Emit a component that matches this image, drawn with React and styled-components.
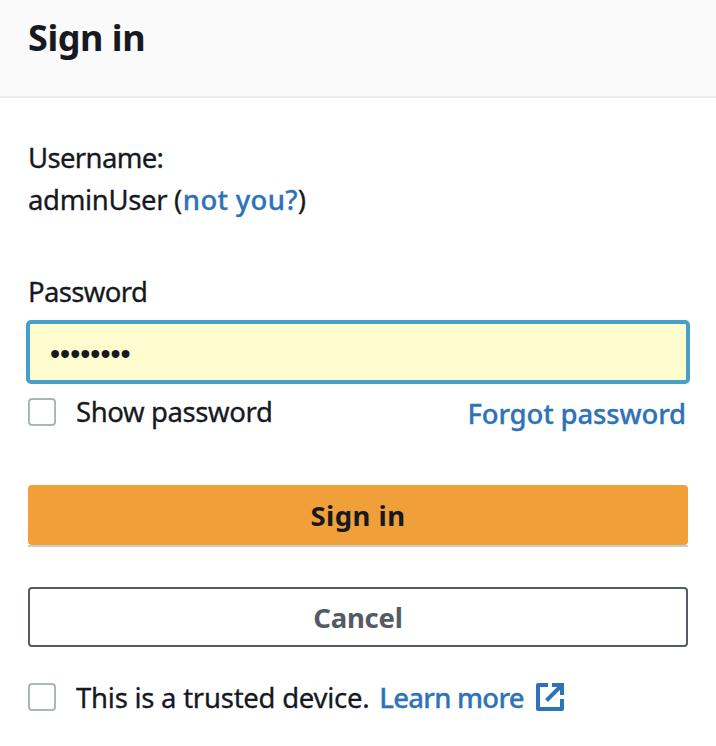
import React from "react";
import styled, { createGlobalStyle } from "styled-components";

const GlobalStyle = createGlobalStyle`
  *, *::before, *::after { box-sizing: border-box; }
  html, body { margin: 0; padding: 0; background: #fff; }
  body {
    font-family: "Noto Sans", "Open Sans", sans-serif;
    font-size: 27.5px;
    line-height: 42px;
    color: #16191f;
    overflow: hidden;
  }
`;

const Panel = styled.main`
  width: 716px;
  height: 746px;
  background: #fff;
`;

const Header = styled.header`
  height: 98px;
  padding: 14px 28px 0;
  background: #fafafa;
  border-bottom: 2px solid #eaeded;
`;

const Title = styled.h1`
  margin: 0;
  font-size: 36px;
  line-height: 48px;
  font-weight: 700;
  letter-spacing: -0.45px;
`;

const Form = styled.form`
  display: flex;
  flex-direction: column;
  padding: 39px 28px 0;
`;

const Text = styled.span`
  white-space: pre;
  letter-spacing: ${(p) => p.$track || 0}px;
  -webkit-text-stroke: 0.3px currentColor;
`;

const Line = styled.div`
  display: flex;
  height: 42px;
`;

const Link = styled.a`
  white-space: pre;
  color: #2e73b8;
  font-weight: 500;
  text-decoration: none;
  letter-spacing: ${(p) => p.$track || 0}px;
  margin-left: ${(p) => p.$gap || 0}px;
  -webkit-text-stroke: 0.3px currentColor;
`;

const Label = styled.label`
  margin-top: 50px;
  height: 42px;
`;

const PasswordField = styled.div`
  display: flex;
  align-items: center;
  height: 64px;
  margin: 7px -2px 0;
  padding: 4px 0 0 20px;
  background: #fffccf;
  border: 4px solid #469fc7;
  border-radius: 5px;
`;

const Mask = styled.span`
  font-family: "Liberation Sans", sans-serif;
  font-size: 28.8px;
  line-height: 52px;
`;

const Options = styled.div`
  display: flex;
  height: 42px;
  margin-top: ${(p) => p.$top}px;
`;

const Checkbox = styled.span`
  flex: none;
  width: 28px;
  height: 28px;
  margin: ${(p) => p.$top}px 20px 0 0;
  border: 2px solid #aab7b8;
  border-radius: 4px;
  background: #fff;
`;

const ForgotLink = styled(Link)`
  margin: 2px 2px 0 auto;
`;

const Button = styled.button`
  width: 100%;
  height: 60px;
  padding: 0;
  border: 0;
  border-radius: 4px;
  font: inherit;
  font-weight: 700;
`;

const PrimaryWrap = styled.div`
  height: 62px;
  margin-top: 52px;
  border-bottom: 2px solid #ccc;
`;

const PrimaryButton = styled(Button)`
  display: block;
  padding-top: 2px;
  background: #f19f39;
  color: #16191f;
  letter-spacing: 0.45px;
`;

const SecondaryButton = styled(Button)`
  margin-top: 40px;
  padding-top: 2px;
  background: #fff;
  border: 2px solid #545b64;
  color: #545b64;
  letter-spacing: -0.25px;
`;

const ExternalIcon = styled.svg`
  flex: none;
  width: 28px;
  height: 28px;
  margin: 6px 0 0 12px;
  fill: none;
  stroke: #2e73b8;
  stroke-width: 4;
`;

export default function App() {
  return (
    <>
      <GlobalStyle />
      <Panel>
        <Header>
          <Title>Sign in</Title>
        </Header>
        <Form>
          <Line><Text $track={-0.65}>Username:</Text></Line>
          <Line>
            <Text $track={-0.35}>adminUser (</Text>
            <Link $track={0.3} $gap={1}>not you?</Link>
            <Text>)</Text>
          </Line>
          <Label><Text $track={-0.65}>Password</Text></Label>
          <PasswordField><Mask>••••••••</Mask></PasswordField>
          <Options $top={7}>
            <Checkbox $top={7} />
            <Text $track={-0.4}>Show password</Text>
            <ForgotLink $track={-0.15}>Forgot password</ForgotLink>
          </Options>
          <PrimaryWrap>
            <PrimaryButton type="button">Sign in</PrimaryButton>
          </PrimaryWrap>
          <SecondaryButton type="button">Cancel</SecondaryButton>
          <Options $top={30}>
            <Checkbox $top={6} />
            <Text $track={-0.25}>This is a trusted device. </Text>
            <Link $track={-0.75} $gap={3}>Learn more</Link>
            <ExternalIcon viewBox="0 0 28 28">
              <path strokeLinejoin="round" d="M12 2H2V26H26V16" />
              <path d="M16 2H26V12M26 2L10.5 17.5" />
            </ExternalIcon>
          </Options>
        </Form>
      </Panel>
    </>
  );
}
